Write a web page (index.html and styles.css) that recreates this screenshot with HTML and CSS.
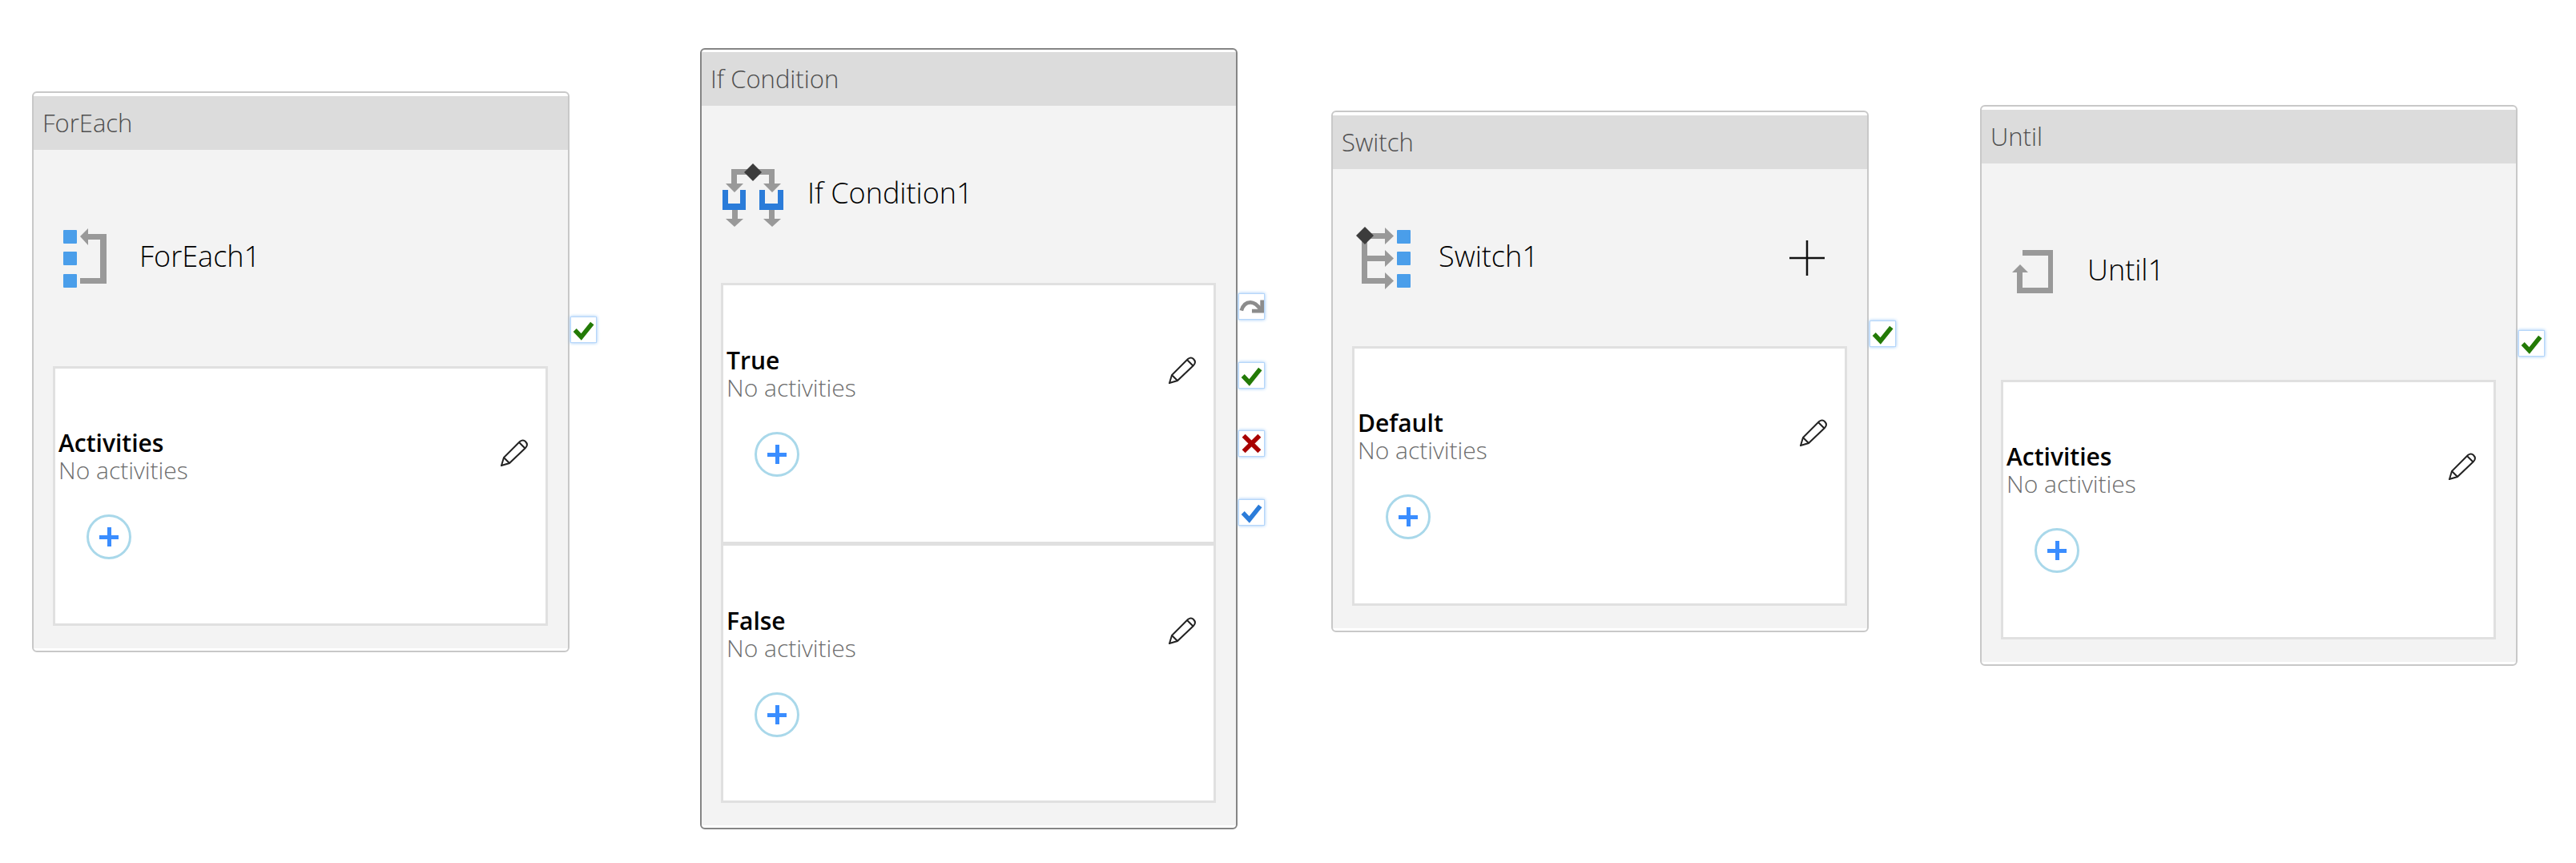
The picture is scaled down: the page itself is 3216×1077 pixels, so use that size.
FILE: index.html
```html
<html>
    <head>
        <title>Pipeline canvas</title>
        <link rel="stylesheet" href="styles.css">
    </head>
    <body>
        <svg class="defs" width="0" height="0">
            <symbol id="pencil" viewBox="0 0 34 34">
                <path d="M1 33 L4 23 L24 3 Q28 0 31 3 Q35 7 31 11 L11 30 Z M4 23 L11 30 M23 4 L30 11" fill="none" stroke="#222" stroke-width="2"/>
            </symbol>
            <symbol id="check" viewBox="0 0 33 33">
                <path d="M5 17 L13.5 26 L28 8" fill="none" stroke="currentColor" stroke-width="6"/>
            </symbol>
        </svg>

        <main class="canvas">
            <section class="card card-foreach">
                <header class="card-title">ForEach</header>
                <div class="card-body">
                    <div class="summary summary-tall">
                        <svg class="type-icon" viewBox="0 0 80 80">
                            <rect class="square" x="13" y="5" width="17" height="17" rx="1"/>
                            <rect class="square" x="13" y="32" width="17" height="17" rx="1"/>
                            <rect class="square" x="13" y="60" width="17" height="17" rx="1"/>
                            <polygon class="arrow" points="34,13 44,3 44,10 67,10 67,72 34,72 34,65 59,65 59,17 44,17 44,24"/>
                        </svg>
                        <span class="name">ForEach1</span>
                    </div>
                    <div class="panel">
                        <div class="panel-head">
                            <div>
                                <div class="panel-label">Activities</div>
                                <div class="panel-empty">No activities</div>
                            </div>
                            <svg class="pencil"><use href="#pencil"/></svg>
                        </div>
                        <button class="add"><span class="add-plus"></span></button>
                    </div>
                </div>
                <div class="badges badges-low">
                    <span class="badge green"><svg><use href="#check"/></svg></span>
                </div>
            </section>

            <section class="card card-if">
                <header class="card-title">If Condition</header>
                <div class="card-body">
                    <div class="summary">
                        <svg class="type-icon" viewBox="0 0 80 80">
                            <polygon class="arrow" points="13,8 67,8 67,26 75,26 64,37 53,26 60,26 60,15 20,15 20,26 28,26 17,37 6,26 13,26"/>
                            <polygon class="arrow" points="14,59 21,59 21,70 28,70 17,80 6,70 14,70"/>
                            <polygon class="arrow" points="60,59 67,59 67,70 75,70 64,80 53,70 60,70"/>
                            <polygon class="branch" points="2,34 9,34 9,51 24,51 24,34 31,34 31,59 2,59"/>
                            <polygon class="branch" points="48,34 55,34 55,51 71,51 71,34 78,34 78,59 48,59"/>
                            <polygon class="diamond" points="40,1 51,12 40,23 29,12"/>
                        </svg>
                        <span class="name">If Condition1</span>
                    </div>
                    <div class="panel">
                        <div class="panel-head">
                            <div>
                                <div class="panel-label">True</div>
                                <div class="panel-empty">No activities</div>
                            </div>
                            <svg class="pencil"><use href="#pencil"/></svg>
                        </div>
                        <button class="add"><span class="add-plus"></span></button>
                    </div>
                    <div class="panel">
                        <div class="panel-head">
                            <div>
                                <div class="panel-label">False</div>
                                <div class="panel-empty">No activities</div>
                            </div>
                            <svg class="pencil"><use href="#pencil"/></svg>
                        </div>
                        <button class="add"><span class="add-plus"></span></button>
                    </div>
                </div>
                <div class="badges badges-if">
                    <span class="badge">
                        <svg viewBox="0 0 33 33">
                            <path d="M3 22 Q6 11 15 11 Q22 11 29 21" fill="none" stroke="#8c8c8c" stroke-width="5"/>
                            <polygon points="33,8 33,25 17,25 17,20 28,20 28,8" fill="#8c8c8c"/>
                        </svg>
                    </span>
                    <span class="badge green"><svg><use href="#check"/></svg></span>
                    <span class="badge">
                        <svg viewBox="0 0 33 33">
                            <path d="M6 6 L27 27 M27 6 L6 27" fill="none" stroke="#a80000" stroke-width="6"/>
                        </svg>
                    </span>
                    <span class="badge blue"><svg><use href="#check"/></svg></span>
                </div>
            </section>

            <section class="card card-switch">
                <header class="card-title">Switch</header>
                <div class="card-body">
                    <div class="summary">
                        <svg class="type-icon" viewBox="0 0 80 80">
                            <polygon class="arrow" points="12,9 41,9 41,2 52,12.5 41,23 41,16 19,16 19,37 41,37 41,30 52,40.5 41,51 41,44 19,44 19,65 41,65 41,58 52,68.5 41,79 41,72 12,72"/>
                            <polygon class="diamond" points="16,1 27,12 16,23 5,12"/>
                            <rect class="square" x="56" y="5" width="17" height="17" rx="1"/>
                            <rect class="square" x="56" y="32" width="17" height="17" rx="1"/>
                            <rect class="square" x="56" y="60" width="17" height="17" rx="1"/>
                        </svg>
                        <span class="name">Switch1</span>
                        <svg class="add-case" viewBox="0 0 44 44">
                            <path d="M22 0 V44 M0 22 H44" stroke="#111" stroke-width="2.5"/>
                        </svg>
                    </div>
                    <div class="panel">
                        <div class="panel-head">
                            <div>
                                <div class="panel-label">Default</div>
                                <div class="panel-empty">No activities</div>
                            </div>
                            <svg class="pencil"><use href="#pencil"/></svg>
                        </div>
                        <button class="add"><span class="add-plus"></span></button>
                    </div>
                </div>
                <div class="badges badges-switch">
                    <span class="badge green"><svg><use href="#check"/></svg></span>
                </div>
            </section>

            <section class="card card-until">
                <header class="card-title">Until</header>
                <div class="card-body">
                    <div class="summary summary-tall">
                        <svg class="type-icon" viewBox="0 0 80 80">
                            <polygon class="arrow" points="27,13 65,13 65,67 20,67 20,41 14,41 24,31 34,41 27,41 27,60 59,60 59,20 27,20"/>
                        </svg>
                        <span class="name">Until1</span>
                    </div>
                    <div class="panel">
                        <div class="panel-head">
                            <div>
                                <div class="panel-label">Activities</div>
                                <div class="panel-empty">No activities</div>
                            </div>
                            <svg class="pencil"><use href="#pencil"/></svg>
                        </div>
                        <button class="add"><span class="add-plus"></span></button>
                    </div>
                </div>
                <div class="badges badges-low">
                    <span class="badge green"><svg><use href="#check"/></svg></span>
                </div>
            </section>
        </main>
    </body>
</html>
```

FILE: styles.css
```css
body {
    margin: 0;
    background-color: white;
    font-family: "Open Sans", "Noto Sans", sans-serif;
}

.defs {
    position: absolute;
}

.canvas {
    position: relative;
    width: 3216px;
    height: 1077px;
    overflow: hidden;
}

/* nodes sit on a free canvas */
.card {
    position: absolute;
    box-sizing: border-box;
    width: 671px;
    padding: 4px 0 3px;
    background-color: white;
    border: 2px solid #c8c8c8;
    border-radius: 6px;
}

.card-foreach {
    left: 40px;
    top: 114px;
}

.card-if {
    left: 874px;
    top: 60px;
    padding-top: 3px;
    border-color: #858585;
}

.card-switch {
    left: 1662px;
    top: 138px;
}

.card-until {
    left: 2472px;
    top: 131px;
}

.card-title {
    box-sizing: border-box;
    height: 67px;
    padding-left: 11px;
    line-height: 66px;
    font-size: 31px;
    font-weight: 350;
    color: #4f4f4f;
    background-color: #dcdcdc;
}

.card-body {
    padding: 0 25px 28px 24px;
    background-color: #f3f3f3;
}

.summary {
    display: flex;
    align-items: center;
    height: 221px;
}

.summary-tall {
    height: 270px;
}

.type-icon {
    flex: none;
    width: 80px;
    height: 80px;
    margin-right: 28px;
}

.square {
    fill: #4a9eea;
}

.arrow {
    fill: #999;
}

.branch {
    fill: #2b7cd9;
}

.diamond {
    fill: #3c3c3c;
}

.name {
    margin-bottom: 5px;
    font-size: 36px;
    font-weight: 350;
    color: black;
}

.add-case {
    width: 44px;
    height: 44px;
    margin-left: auto;
    margin-right: 28px;
}

.panel {
    box-sizing: border-box;
    height: 324px;
    padding: 76px 0 0 4px;
    background-color: white;
    border: 3px solid #e0e0e0;
}

.card-if .panel {
    height: 326px;
    padding-top: 77px;
}

.card-if .panel + .panel {
    height: 324px;
    margin-top: -1px;
}

.panel-head {
    display: flex;
    justify-content: space-between;
    align-items: flex-start;
    padding-right: 22px;
}

.panel-label {
    font-size: 30px;
    line-height: 34px;
    font-weight: 600;
    color: black;
}

.panel-empty {
    font-size: 30px;
    line-height: 34px;
    font-weight: 350;
    color: #6e6e6e;
}

.pencil {
    width: 34px;
    height: 34px;
    margin-top: 12px;
}

.add {
    display: flex;
    align-items: center;
    justify-content: center;
    box-sizing: border-box;
    width: 56px;
    height: 56px;
    margin: 38px 0 0 35px;
    padding: 0;
    background-color: white;
    border: 3px solid #a9d8ea;
    border-radius: 50%;
}

.add-plus {
    position: relative;
    width: 24px;
    height: 5px;
    background-color: #3a8dff;
}

.add-plus::after {
    content: "";
    position: absolute;
    left: 10px;
    top: -10px;
    width: 5px;
    height: 24px;
    background-color: #3a8dff;
}

.badges {
    position: absolute;
    left: calc(100% + 3px);
    display: flex;
    flex-direction: column;
    gap: 52.5px;
}

.badges-low {
    top: 279px;
}

.badges-switch {
    top: 260px;
}

.badges-if {
    top: 304px;
}

.badge {
    box-sizing: border-box;
    display: block;
    width: 33px;
    height: 33px;
    background-color: white;
    border: 1px solid #b5d6fa;
    box-shadow: 0 0 4px #8fc0f5;
}

.badge svg {
    display: block;
    width: 31px;
    height: 31px;
}

.green {
    color: #237a06;
}

.blue {
    color: #2b7cd9;
}
```
